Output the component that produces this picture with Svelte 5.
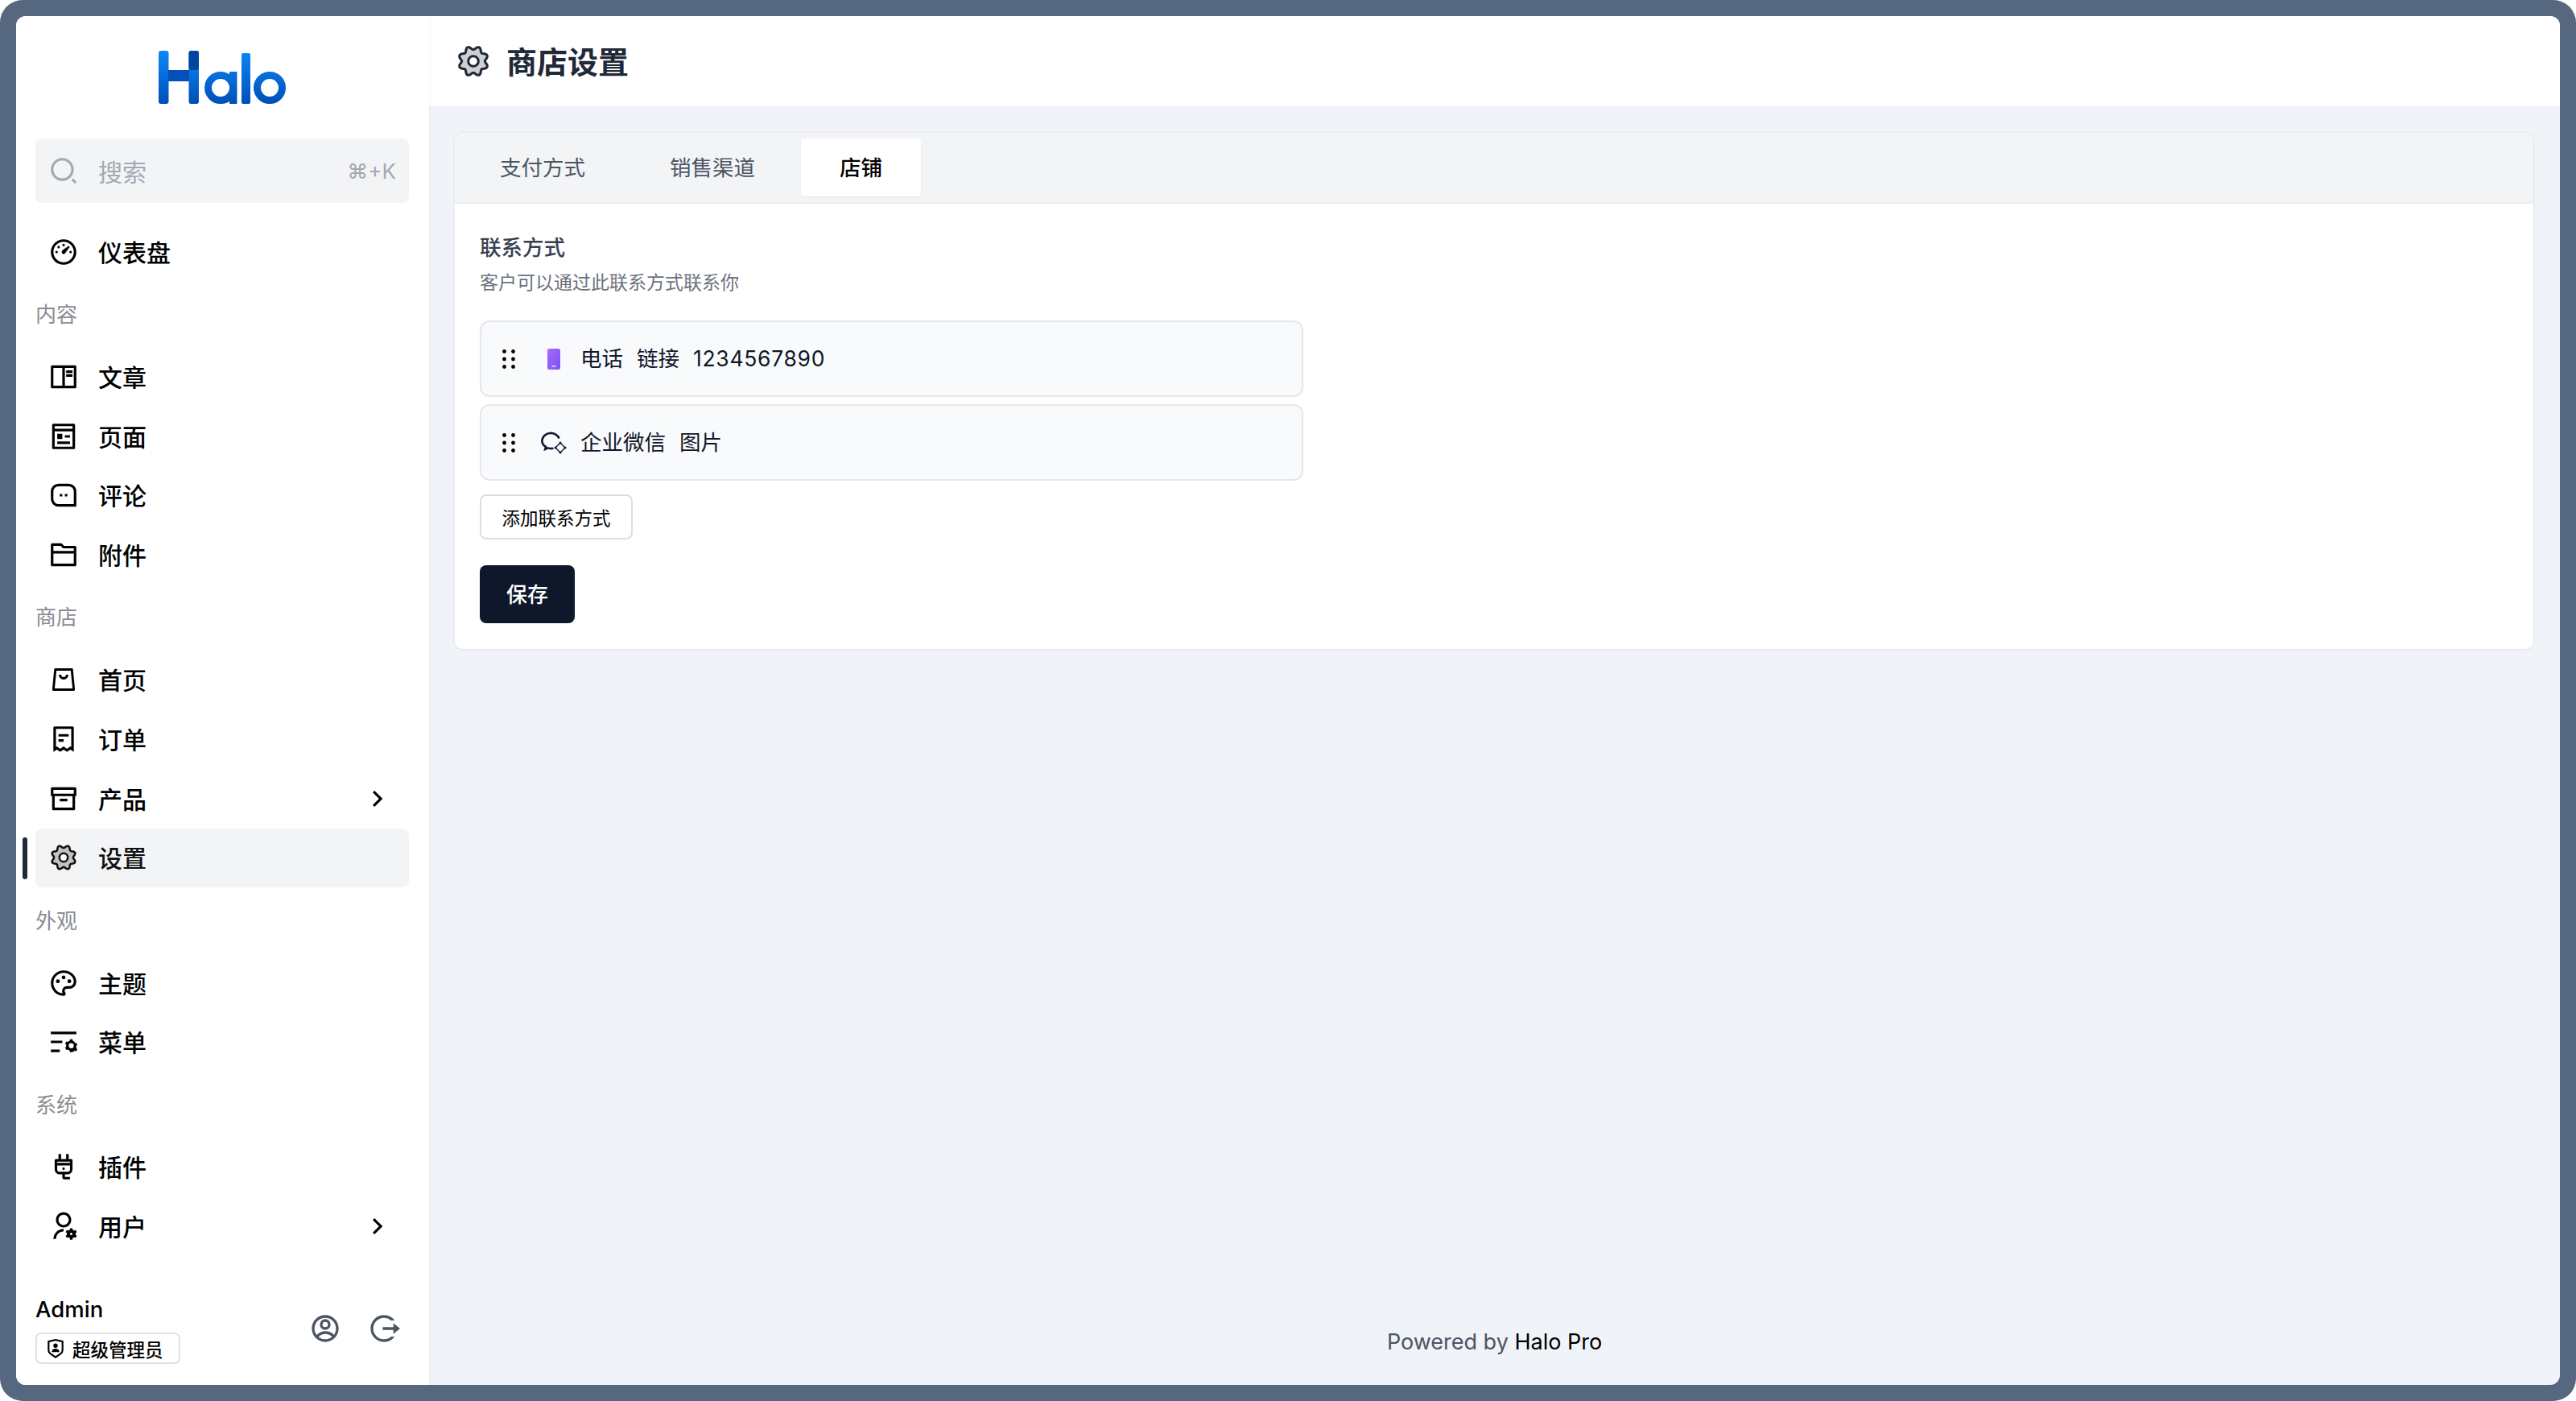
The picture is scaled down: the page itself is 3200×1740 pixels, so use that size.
<script>
  const icons = {
    search: 'M11 2c4.968 0 9 4.032 9 9s-4.032 9-9 9-9-4.032-9-9 4.032-9 9-9zm0 16c3.867 0 7-3.133 7-7 0-3.868-3.133-7-7-7-3.868 0-7 3.132-7 7 0 3.867 3.132 7 7 7zm8.485.071l2.829 2.828-1.415 1.415-2.828-2.829 1.414-1.414z',
    dashboard: 'M12 2c5.523 0 10 4.477 10 10s-4.477 10-10 10S2 17.523 2 12 6.477 2 12 2zm0 2c-4.418 0-8 3.582-8 8s3.582 8 8 8 8-3.582 8-8-3.582-8-8-8zm3.833 3.337a.596.596 0 0 1 .763.067.59.59 0 0 1 .063.76c-2.18 3.046-3.38 4.678-3.598 4.897a1.5 1.5 0 0 1-2.122-2.122c.374-.373 2.005-1.574 4.894-3.602zM17.5 11a1 1 0 1 1 0 2 1 1 0 0 1 0-2zm-11 0a1 1 0 1 1 0 2 1 1 0 0 1 0-2zm2.318-3.596a1 1 0 1 1-1.414 1.414 1 1 0 0 1 1.414-1.414zM12 5.5a1 1 0 1 1 0 2 1 1 0 0 1 0-2z',
    book: 'M2 3.993A1 1 0 0 1 2.992 3h18.016c.548 0 .992.445.992.993v16.014a1 1 0 0 1-.992.993H2.992A.993.993 0 0 1 2 20.007V3.993zM11 5H4v14h7V5zm2 0v14h7V5h-7zm1 2h5v2h-5V7zm0 3h5v2h-5v-2z',
    pages: 'M5 8v12h14V8H5zm0-2h14V4H5v2zm15 16H4a1 1 0 0 1-1-1V3a1 1 0 0 1 1-1h16a1 1 0 0 1 1 1v18a1 1 0 0 1-1 1zM7 10h4v4H7v-4zm0 6h10v2H7v-2zm6-5h4v2h-4v-2z',
    comment: 'M8 3h8a6 6 0 0 1 6 6v12H8a6 6 0 0 1-6-6V9a6 6 0 0 1 6-6zm0 2a4 4 0 0 0-4 4v6a4 4 0 0 0 4 4h12V9a4 4 0 0 0-4-4H8zm1 6h2v2H9v-2zm4 0h2v2h-2v-2z',
    folder: 'M12.414 5H21a1 1 0 0 1 1 1v14a1 1 0 0 1-1 1H3a1 1 0 0 1-1-1V4a1 1 0 0 1 1-1h7.414l2 2zM20 9V7h-8.414l-2-2H4v4h16zm0 2H4v8h16v-8z',
    bag: 'M5.600 3.200h12.800a1 1 0 0 1 1 .9l1.500 15.600a1 1 0 0 1-1 1.100H4.100a1 1 0 0 1-1-1.100l1.500-15.600a1 1 0 0 1 1-.9zM6.400 5.100 5 18.900h14L17.600 5.100zM8.200 8.200h2a1.800 1.800 0 0 0 3.600 0h2a3.800 3.800 0 0 1-7.600 0z',
    bill: 'M5 2h14a1 1 0 0 1 1 1v19l-2.700-1.800-2.650 1.800L12 20.200 9.350 22 6.700 20.200 4 22V3a1 1 0 0 1 1-1zm1 2v14.200l.7-.5 2.650 1.800L12 17.700l2.650 1.800 2.650-1.800.7.5V4H6zm2 4h8v2H8V8zm0 4h4v2H8v-2z',
    archive: 'M3 10H2V4.003C2 3.449 2.455 3 2.992 3h18.016A.99.99 0 0 1 22 4.003V10h-1v10.001a.996.996 0 0 1-.993.999H3.993A.996.996 0 0 1 3 20.001V10zm16 0H5v9h14v-9zM4 5v3h16V5H4zm5 7h6v2H9v-2z',
    palette: 'M12 2c5.522 0 10 3.978 10 8.889a5.558 5.558 0 0 1-5.556 5.555h-1.966c-.922 0-1.667.745-1.667 1.667 0 .422.167.811.422 1.100.267.3.434.689.434 1.122C13.667 21.256 12.900 22 12 22 6.478 22 2 17.522 2 12S6.478 2 12 2zm-1.189 16.111a3.664 3.664 0 0 1 3.667-3.667h1.966A3.558 3.558 0 0 0 20 10.890C20 7.139 16.468 4 12 4a8 8 0 0 0-.676 15.972 3.648 3.648 0 0 1-.513-1.860zM7.500 12a1.500 1.500 0 1 1 0-3 1.500 1.500 0 0 1 0 3zm9 0a1.500 1.500 0 1 1 0-3 1.500 1.500 0 0 1 0 3zM12 9a1.500 1.500 0 1 1 0-3 1.500 1.500 0 0 1 0 3z',
    menu: 'M2 18h7v2H2v-2zm0-7h9v2H2v-2zm0-7h20v2H2V4zm18.674 9.025l1.156-.391 1 1.732-.916.805a4.017 4.017 0 0 1 0 1.658l.916.805-1 1.732-1.156-.391c-.41.37-.898.655-1.435.83L19 20h-2l-.24-1.196a3.996 3.996 0 0 1-1.434-.83l-1.156.392-1-1.732.916-.805a4.017 4.017 0 0 1 0-1.658l-.916-.805 1-1.732 1.156.391c.41-.37.898-.655 1.435-.83L17 10h2l.24 1.196c.536.174 1.024.46 1.434.83zM18 17a2 2 0 1 0 0-4 2 2 0 0 0 0 4z',
    plug: 'M13 18v2h4v2h-4a2 2 0 0 1-2-2v-2H9a4 4 0 0 1-4-4V7a1 1 0 0 1 1-1h2V2h2v4h4V2h2v4h2a1 1 0 0 1 1 1v7a4 4 0 0 1-4 4h-2zm-4-2h6a2 2 0 0 0 2-2v-3H7v3a2 2 0 0 0 2 2zm8-8H7v1h10V8zm-5 6.500a1 1 0 1 1 0-2 1 1 0 0 1 0 2z',
    users: 'M12 14v2a6 6 0 0 0-6 6H4a8 8 0 0 1 8-8zm0-1c-3.315 0-6-2.685-6-6s2.685-6 6-6 6 2.685 6 6-2.685 6-6 6zm0-2c2.210 0 4-1.790 4-4s-1.790-4-4-4-4 1.790-4 4 1.790 4 4 4zm2.595 7.812a3.510 3.510 0 0 1 0-1.623l-.992-.573 1-1.732.992.573A3.496 3.496 0 0 1 17 14.645V13.500h2v1.145c.532.158 1.012.44 1.405.812l.992-.573 1 1.732-.992.573a3.510 3.510 0 0 1 0 1.622l.992.573-1 1.732-.992-.573a3.496 3.496 0 0 1-1.405.812V22.500h-2v-1.145a3.496 3.496 0 0 1-1.405-.812l-.992.573-1-1.732.992-.572zM18 17a1 1 0 1 0 0 2 1 1 0 0 0 0-2z',
    chevron: 'M13.172 12l-4.950-4.950 1.414-1.414L16 12l-6.364 6.364-1.414-1.414z',
    account: 'M12 22C6.477 22 2 17.523 2 12S6.477 2 12 2s10 4.477 10 10-4.477 10-10 10zm-4.987-3.744A7.966 7.966 0 0 0 12 20c1.970 0 3.773-.712 5.167-1.892A6.979 6.979 0 0 0 12.160 16a6.981 6.981 0 0 0-5.147 2.256zM5.616 16.820A8.975 8.975 0 0 1 12.160 14a8.972 8.972 0 0 1 6.362 2.634 8 8 0 1 0-12.906.187zM12 13a4 4 0 1 1 0-8 4 4 0 0 1 0 8zm0-2a2 2 0 1 0 0-4 2 2 0 0 0 0 4z',
    logout: 'M12 22C6.477 22 2 17.523 2 12S6.477 2 12 2a9.985 9.985 0 0 1 8 4h-2.710a8 8 0 1 0 .001 12h2.710A9.985 9.985 0 0 1 12 22zm7-6v-3h-8v-2h8V8l5 4-5 4z',
    shield: 'M3.783 2.826L12 1l8.217 1.826a1 1 0 0 1 .783.976v9.987a6 6 0 0 1-2.672 4.992L12 23l-6.328-4.219A6 6 0 0 1 3 13.790V3.802a1 1 0 0 1 .783-.976zM5 4.604v9.185a4 4 0 0 0 1.781 3.328L12 20.597l5.219-3.480A4 4 0 0 0 19 13.790V4.604L12 3.050 5 4.604zM12 11a2.500 2.500 0 1 1 0-5 2.500 2.500 0 0 1 0 5zm-4.473 5a4.500 4.500 0 0 1 8.946 0H7.527z'
  };

  // wavy 8-lobe outline for the duotone settings gear
  const gear = Array.from({ length: 96 }, (_, i) => {
    const a = (i / 96) * Math.PI * 2 + Math.PI / 8;
    const r = 8.6 + 1.1 * Math.cos((a - Math.PI / 8) * 8);
    return `${i ? 'L' : 'M'}${(12 + r * Math.cos(a)).toFixed(2)} ${(12 + r * Math.sin(a)).toFixed(2)}`;
  }).join('') + 'z';

  const groups = [
    { items: [{ label: '仪表盘', icon: 'dashboard' }] },
    { title: '内容', items: [
      { label: '文章', icon: 'book' },
      { label: '页面', icon: 'pages' },
      { label: '评论', icon: 'comment' },
      { label: '附件', icon: 'folder' }
    ] },
    { title: '商店', items: [
      { label: '首页', icon: 'bag' },
      { label: '订单', icon: 'bill' },
      { label: '产品', icon: 'archive', more: true },
      { label: '设置', icon: 'gear', active: true }
    ] },
    { title: '外观', items: [
      { label: '主题', icon: 'palette' },
      { label: '菜单', icon: 'menu' }
    ] },
    { title: '系统', items: [
      { label: '插件', icon: 'plug' },
      { label: '用户', icon: 'users', more: true }
    ] }
  ];

  const tabs = [
    { label: '支付方式' },
    { label: '销售渠道' },
    { label: '店铺', active: true }
  ];
</script>

{#snippet gearIcon(cls)}
  <svg class={cls} viewBox="0 0 24 24" aria-hidden="true">
    <path d={gear} fill="currentColor" fill-opacity="0.22" stroke="currentColor" stroke-width="1.6" stroke-linejoin="round" />
    <circle cx="12" cy="12" r="3.3" fill="#fff" stroke="currentColor" stroke-width="1.6" />
  </svg>
{/snippet}

{#snippet dragDots()}
  <svg class="drag" viewBox="0 0 16 24" aria-hidden="true">
    {#each [2.5, 12, 21.5] as y}
      <circle cx="2.500" cy={y} r="2.400" />
      <circle cx="13.500" cy={y} r="2.400" />
    {/each}
  </svg>
{/snippet}

<div class="frame">
  <div class="window">
    <aside class="sidebar">
      <div class="logo">
        <svg viewBox="0 0 158 66" width="158" height="66" role="img" aria-label="Halo">
          <defs>
            <linearGradient id="logoBlue" gradientUnits="userSpaceOnUse" x1="0" y1="0" x2="0" y2="66">
              <stop offset="0" stop-color="#0c88f8" />
              <stop offset="1" stop-color="#004fb6" />
            </linearGradient>
          </defs>
          <g fill="url(#logoBlue)">
            <rect x="0" y="0" width="12.5" height="66" rx="3" />
            <rect x="37.5" y="0" width="12.5" height="66" rx="3" />
            <rect x="103" y="3" width="11" height="63" rx="2" />
            <rect x="88" y="26" width="9.5" height="40" rx="1" />
          </g>
          <rect x="12" y="24" width="26" height="14" fill="#0151b8" />
          <rect x="37.5" y="0" width="12.5" height="24" rx="3" fill="#00459f" />
          <g fill="none" stroke="url(#logoBlue)" stroke-width="9">
            <circle cx="77" cy="46" r="15.5" />
            <circle cx="138" cy="46" r="15.5" />
          </g>
        </svg>
      </div>

      <div class="search">
        <svg class="icon" viewBox="0 0 24 24" aria-hidden="true"><path d={icons.search} /></svg>
        <span class="search-text">搜索</span>
        <span class="search-key">⌘+K</span>
      </div>

      <nav class="nav">
        {#each groups as group}
          {#if group.title}
            <div class="nav-title">{group.title}</div>
          {/if}
          {#each group.items as item}
            <div class="nav-item" class:active={item.active}>
              {#if item.icon === 'gear'}
                {@render gearIcon('icon')}
              {:else}
                <svg class="icon" viewBox="0 0 24 24" aria-hidden="true"><path d={icons[item.icon]} /></svg>
              {/if}
              <span class="nav-label">{item.label}</span>
              {#if item.more}
                <svg class="icon chevron" viewBox="0 0 24 24" aria-hidden="true"><path d={icons.chevron} /></svg>
              {/if}
            </div>
          {/each}
        {/each}
      </nav>

      <div class="profile">
        <div class="profile-info">
          <div class="profile-name">Admin</div>
          <div class="badge">
            <svg viewBox="0 0 24 24" aria-hidden="true"><path d={icons.shield} /></svg>
            <span>超级管理员</span>
          </div>
        </div>
        <div class="profile-actions">
          <svg viewBox="0 0 24 24" aria-hidden="true"><path d={icons.account} /></svg>
          <svg viewBox="0 0 24 24" aria-hidden="true"><path d={icons.logout} /></svg>
        </div>
      </div>
    </aside>

    <main class="main">
      <header class="header">
        {@render gearIcon('header-icon')}
        <h1>商店设置</h1>
      </header>

      <section class="card">
        <div class="tabs">
          {#each tabs as tab}
            <div class="tab" class:active={tab.active}>{tab.label}</div>
          {/each}
        </div>
        <div class="card-body">
          <div class="field-label">联系方式</div>
          <div class="field-help">客户可以通过此联系方式联系你</div>

          <div class="contact-row">
            {@render dragDots()}
            <span class="contact-icon">
              <svg class="phone" viewBox="0 0 16 26" aria-hidden="true">
                <defs>
                  <linearGradient id="phoneFill" x1="0" y1="0" x2="1" y2="1">
                    <stop offset="0" stop-color="#a96bfa" />
                    <stop offset="1" stop-color="#7c4ff5" />
                  </linearGradient>
                </defs>
                <rect width="16" height="26" rx="2.5" fill="url(#phoneFill)" />
                <rect x="5.5" y="21" width="5" height="1.6" fill="#e9ddff" />
              </svg>
            </span>
            <span class="contact-text">电话</span>
            <span class="contact-text">链接</span>
            <span class="contact-text digits">1234567890</span>
          </div>

          <div class="contact-row">
            {@render dragDots()}
            <span class="contact-icon">
              <svg class="wecom" viewBox="0 0 32 28" aria-hidden="true">
                <path d="M22.600 8.500A11 10 0 0 0 1.300 11c0 3.600 2 6.500 4.700 8l-.8 3 3.600-1.600c2 .8 4.500.9 6.600.3" />
                <path class="wecom-thin" d="M24 14l6 6-6 6-6-6z" />
                <circle cx="24" cy="14" r="1.500" />
                <circle cx="30" cy="20" r="1.500" />
                <circle cx="24" cy="26" r="1.500" />
                <circle cx="18" cy="20" r="1.500" />
              </svg>
            </span>
            <span class="contact-text">企业微信</span>
            <span class="contact-text">图片</span>
          </div>

          <button type="button" class="btn-add">添加联系方式</button>
          <button type="button" class="btn-save">保存</button>
        </div>
      </section>

      <footer class="footer">Powered by <span>Halo Pro</span></footer>
    </main>
  </div>
</div>

<style>
  :global(body) {
    margin: 0;
    background: #fff;
  }

  .frame {
    box-sizing: border-box;
    width: 3200px;
    height: 1740px;
    padding: 20px;
    background: #566880;
    border-radius: 28px;
    font-family: Inter, "Noto Sans CJK SC", sans-serif;
    color: #000;
  }

  .window {
    display: flex;
    height: 100%;
    border-radius: 12px;
    overflow: hidden;
    background: #f0f3f8;
  }

  .sidebar {
    box-sizing: border-box;
    display: flex;
    flex-direction: column;
    width: 513px;
    flex-shrink: 0;
    height: 100%;
    padding: 0 25px 26px 24px;
    background: #fff;
    box-shadow: 0 0 6px rgba(0, 0, 0, 0.06);
    z-index: 1;
  }

  .logo {
    display: flex;
    justify-content: center;
    padding-top: 43px;
    height: 109px;
    flex-shrink: 0;
  }

  .search {
    display: flex;
    align-items: center;
    height: 80px;
    flex-shrink: 0;
    padding: 0 16px;
    box-sizing: border-box;
    border-radius: 8px;
    background: #f3f4f6;
    color: #a3a8b2;
    fill: #a3a8b2;
  }

  .icon {
    width: 38px;
    height: 38px;
    flex-shrink: 0;
    fill: currentColor;
  }

  .search-text {
    margin-left: 24px;
    font-size: 30px;
  }

  .search-key {
    margin-left: auto;
    font-size: 26px;
  }

  .nav {
    margin-top: 24px;
  }

  .nav-title {
    padding: 24.5px 0 23px 0;
    font-size: 26px;
    line-height: 34px;
    color: #8a8d93;
  }

  .nav-item {
    position: relative;
    display: flex;
    align-items: center;
    height: 73.7px;
    padding: 0 20px 0 16px;
    box-sizing: border-box;
    border-radius: 8px;
    font-size: 30px;
    font-weight: 500;
    color: #000;
  }

  .nav-item.active {
    background: #f3f4f6;
    color: #111;
  }

  .nav-item.active::before {
    content: '';
    position: absolute;
    left: -16px;
    top: 11px;
    width: 6px;
    height: 52px;
    border-radius: 3px;
    background: #1f2937;
  }

  .nav-label {
    margin-left: 24px;
    margin-top: -2px;
  }

  .chevron {
    margin-left: auto;
  }

  .profile {
    display: flex;
    align-items: flex-end;
    justify-content: space-between;
    margin-top: auto;
  }

  .profile-name {
    font-size: 27.5px;
    font-weight: 500;
    line-height: 36px;
    margin-bottom: 11px;
  }

  .badge {
    display: flex;
    align-items: center;
    gap: 8px;
    box-sizing: border-box;
    width: 180px;
    height: 39px;
    padding-left: 10px;
    border: 2px solid #dfe1e5;
    border-radius: 7px;
    font-size: 22.5px;
    font-weight: 500;
    white-space: nowrap;
  }

  .badge svg {
    width: 26px;
    height: 26px;
    flex-shrink: 0;
  }

  .profile-actions {
    display: flex;
    gap: 33px;
    padding: 0 11px 24px 0;
    fill: #4b5563;
  }

  .profile-actions svg {
    width: 40px;
    height: 40px;
  }

  .main {
    flex: 1;
    display: flex;
    flex-direction: column;
    min-width: 0;
  }

  .header {
    display: flex;
    align-items: center;
    gap: 18px;
    box-sizing: border-box;
    height: 112px;
    flex-shrink: 0;
    padding-left: 32px;
    background: #fff;
    color: #1f2937;
  }

  .header-icon {
    width: 46px;
    height: 46px;
  }

  .header h1 {
    margin: 0 0 3px;
    font-size: 38px;
    font-weight: 700;
    color: #1f2937;
  }

  .card {
    box-sizing: border-box;
    height: 645px;
    margin: 31px 31px 0 30px;
    border: 2px solid #eaecf0;
    border-radius: 12px;
    background: #fff;
    overflow: hidden;
  }

  .tabs {
    display: flex;
    gap: 9px;
    box-sizing: border-box;
    height: 88px;
    padding: 7px 0 0 8px;
    background: #f3f4f6;
    border-bottom: 2px solid #ebedf0;
  }

  .tab {
    box-sizing: border-box;
    height: 72px;
    padding: 0 48px;
    border-radius: 4px;
    font-size: 26.5px;
    line-height: 72px;
    color: #4b5563;
  }

  .tab.active {
    background: #fff;
    color: #000;
    font-weight: 500;
    box-shadow: 0 1px 2px rgba(0, 0, 0, 0.06);
  }

  .card-body {
    padding: 36px 0 0 31px;
  }

  .field-label {
    font-size: 26.5px;
    font-weight: 500;
    line-height: 36px;
    color: #374151;
  }

  .field-help {
    margin: 8px 0 29px;
    font-size: 23px;
    line-height: 36px;
    color: #6b7280;
  }

  .contact-row {
    display: flex;
    align-items: center;
    gap: 17px;
    box-sizing: border-box;
    width: 1023px;
    height: 95px;
    margin-bottom: 9px;
    padding-left: 26px;
    border: 2px solid #e5e7eb;
    border-radius: 12px;
    background: #f9fafb;
    color: #0f172a;
  }

  .drag {
    width: 16px;
    height: 24px;
    fill: #000;
  }

  .contact-icon {
    display: flex;
    justify-content: center;
    width: 32px;
    margin-left: 15px;
  }

  .phone {
    width: 16px;
    height: 26px;
  }

  .wecom {
    width: 32px;
    height: 28px;
    fill: none;
    stroke: #0f172a;
    stroke-width: 2.6;
  }

  .wecom-thin {
    stroke-width: 1.4;
  }

  .wecom circle {
    fill: #0f172a;
    stroke: none;
  }

  .contact-text {
    font-size: 26.5px;
    line-height: 1;
  }

  .digits {
    letter-spacing: 0.7px;
  }

  .btn-add,
  .btn-save {
    display: block;
    box-sizing: border-box;
    font-family: inherit;
    padding: 0;
  }

  .btn-add {
    width: 190px;
    height: 56px;
    margin-top: 17px;
    border: 2px solid #dcdee2;
    border-radius: 8px;
    background: #fff;
    font-size: 22.5px;
    color: #000;
  }

  .btn-save {
    width: 118px;
    height: 72px;
    margin-top: 32px;
    padding-bottom: 3px;
    border: none;
    border-radius: 8px;
    background: #0f172a;
    font-size: 26px;
    font-weight: 500;
    color: #fff;
  }

  .footer {
    margin-top: auto;
    padding-bottom: 35px;
    text-align: center;
    font-size: 27px;
    line-height: 36px;
    color: #4b5563;
  }

  .footer span {
    color: #000;
  }
</style>
